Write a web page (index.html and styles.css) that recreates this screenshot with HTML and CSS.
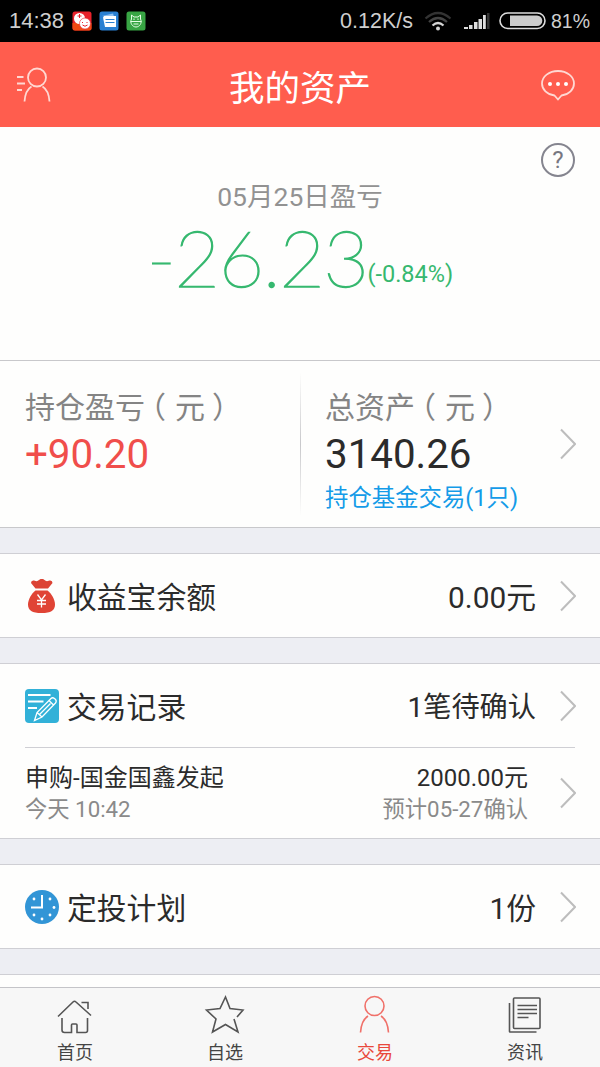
FILE: index.html
```html
<!DOCTYPE html>
<html lang="zh-CN">

<head>
  <meta charset="UTF-8">
  <meta name="viewport" content="width=device-width, initial-scale=1.0">
  <title>我的资产</title>
  <link rel="stylesheet" href="styles.css">
</head>

<body>
  <div class="status">
    <span class="time">14:38</span>
    <svg class="app" viewBox="0 0 20 20">
      <rect width="19" height="19" x=".5" y=".5" rx="2.5" fill="#e8222b"/>
      <path d="M.5 12h19v5a2.500 2.500 0 0 1-2.500 2.500h-14A2.500 2.500 0 0 1 .5 17z" fill="#f04a13"/>
      <circle cx="7.500" cy="7.500" r="5.500" fill="#fff"/>
      <circle cx="13" cy="12.500" r="5.500" fill="#fff" stroke="#e8222b" stroke-width=".6"/>
      <path d="M5.500 5h4M7.500 3v4M10.500 11v1M15 11v1M10.500 14q2.500 2.500 5 0" fill="none" stroke="#e8222b"/>
    </svg>
    <svg class="app" viewBox="0 0 20 20">
      <rect width="19" height="19" x=".5" y=".5" rx="2.500" fill="#2a80d2"/>
      <path d="M3 5l11-2.500 1 3z" fill="#8fc0f0"/>
      <path d="M4 6.500l1-1.500h12v11H6z" fill="#fff"/>
      <path d="M6.500 8.500h9M6.500 11.500h9" stroke="#2a80d2"/>
    </svg>
    <svg class="app" viewBox="0 0 20 20">
      <rect width="19" height="19" x=".5" y=".5" rx="2.500" fill="#38a544"/>
      <path d="M5.500 8V4l2.500 2h4l2.500-2v4c2 4-1 8-4.500 8s-6.500-4-4.500-8zM4.500 10.500h11M7.500 13h5" fill="none" stroke="#e6ffe6"/>
      <path d="M8 7.500V9M12 7.500V9" stroke="#e6ffe6"/>
    </svg>
    <span class="speed">0.12K/s</span>
    <svg class="wifi" width="28" height="20" viewBox="0 0 28 20">
      <g fill="none" stroke-width="2.200">
        <path d="M1.500 7.500q12.500-11 25 0" stroke="#333"/>
        <path d="M5 11q9-8 18 0" stroke="#444"/>
        <path d="M8.500 14.500q5.500-5 11 0" stroke="#d5d5d5"/>
      </g>
      <circle cx="14" cy="17.500" r="2" fill="#d5d5d5"/>
    </svg>
    <svg class="signal" width="27" height="18" viewBox="0 0 27 18">
      <path d="M1 15h4v2H1zM6 13h3.500v4H6zM11 10h3.500v7H11zM15.500 7H19v10h-3.500zM20 3h2.800v14H20z" fill="#ddd"/>
      <path d="M24 1h2.500v16H24z" fill="#333"/>
    </svg>
    <svg class="battery" width="48" height="18" viewBox="0 0 48 18">
      <rect x="1" y="1" width="45" height="15.500" rx="7.700" fill="none" stroke="#ddd" stroke-width="1.600"/>
      <path d="M11 3.500h27a5.300 5.300 0 0 1 0 10.600H11z" fill="#ccc"/>
    </svg>
    <span class="percent">81%</span>
  </div>

  <header class="header">
    <svg width="36" height="36" viewBox="0 0 36 36" class="line-icon">
      <circle cx="21" cy="10.500" r="9"/>
      <path d="M8.500 34.500c.5-7 2-12 7-15M33.500 34.500c-.5-7-2-12-7-15M1 10h6.500M1 16.500h8M1 23h5"/>
    </svg>
    <h1>我的资产</h1>
    <svg width="36" height="32" viewBox="0 0 36 32" class="line-icon">
      <path d="M18 30.500l-3.500-4C7 25.500 2 20.500 2 14.500 2 7.500 9 2 18 2s16 5.500 16 12.500c0 6-5 11-12.500 12z"/>
      <g fill="#fff" stroke="none">
        <circle cx="10" cy="15" r="2"/>
        <circle cx="18" cy="15" r="2"/>
        <circle cx="26" cy="15" r="2"/>
      </g>
    </svg>
  </header>

  <main class="content">
    <section class="hero">
      <span class="help">?</span>
      <div class="date">05月25日盈亏</div>
      <div class="profit"><span class="amount">-26.23</span><span class="rate">(-0.84%)</span></div>
    </section>

    <section class="summary">
      <div class="cell">
        <div class="label">持仓盈亏<span class="paren">（</span>元<span class="paren-end">）</span></div>
        <div class="num up">+90.20</div>
      </div>
      <div class="cell total">
        <div class="label">总资产<span class="paren">（</span>元<span class="paren-end">）</span></div>
        <div class="num">3140.26</div>
        <div class="link">持仓基金交易(1只)</div>
      </div>
      <svg class="arrow" viewBox="0 0 16 32"><path d="M1 1.500L15 16 1 30.500"/></svg>
    </section>

    <section class="card">
      <div class="row">
        <svg class="icon" viewBox="0 0 34 34">
          <path d="M10.500 9.500L6 4q0-3 3-2.500l2.500.8Q13 2 14 1q3-2.500 5.500 0 1 1 2.500 1.300l2.500-.8q3-.5 3 2.500l-4.500 5.500z" fill="#dc4334"/>
          <path d="M10.500 11.500h12c4 3 7.500 9 7.500 14 0 6-4 8.500-13.500 8.500S3 31.500 3 25.500c0-5 3.500-11 7.500-14z" fill="#e04435"/>
          <path d="M12.500 15.500l4 5.500 4-5.500M16.500 21v7.500M12 21.500h9M12 25h9" fill="none" stroke="#fff" stroke-width="1.300"/>
        </svg>
        <span class="name">收益宝余额</span>
        <span class="value">0.00元</span>
        <svg class="arrow" viewBox="0 0 16 32"><path d="M1 1.500L15 16 1 30.500"/></svg>
      </div>
    </section>

    <section class="card">
      <div class="row">
        <svg class="icon" viewBox="0 0 34 34">
          <rect width="34" height="34" rx="4" fill="#32b1d8"/>
          <g fill="none" stroke="#fff" stroke-width="1.800">
            <path d="M3 6h22.500M3 12.500h15.500M3 19h9"/>
            <path d="M9.500 31.500l2.500-8L26 9.500q1.500-1.500 3.500 0l1 1q1.500 1.500 0 3.500L17 28zM12 23.500l5 4.500M24 11.500l4.500 4.500M14.500 25.500l11-11" stroke-width="1.300"/>
          </g>
        </svg>
        <span class="name">交易记录</span>
        <span class="value pending">1笔待确认</span>
        <svg class="arrow" viewBox="0 0 16 32"><path d="M1 1.500L15 16 1 30.500"/></svg>
      </div>
      <div class="record">
        <div>
          <div class="fund">申购-国金国鑫发起</div>
          <div class="note">今天 10:42</div>
        </div>
        <div class="right">
          <div class="fund">2000.00元</div>
          <div class="note">预计05-27确认</div>
        </div>
        <svg class="arrow" viewBox="0 0 16 32"><path d="M1 1.500L15 16 1 30.500"/></svg>
      </div>
    </section>

    <section class="card">
      <div class="row">
        <svg class="icon" viewBox="0 0 34 34">
          <circle cx="17" cy="17" r="17" fill="#3295d6"/>
          <path d="M17 5v12.500H6" fill="none" stroke="#fff" stroke-width="2"/>
          <g fill="#fff">
            <circle cx="25" cy="9" r="1.400"/>
            <circle cx="29" cy="17.500" r="1.400"/>
            <circle cx="25" cy="25" r="1.400"/>
            <circle cx="17" cy="29" r="1.400"/>
            <circle cx="9" cy="25" r="1.400"/>
            <circle cx="9" cy="9" r="1.400"/>
          </g>
        </svg>
        <span class="name">定投计划</span>
        <span class="value">1份</span>
        <svg class="arrow" viewBox="0 0 16 32"><path d="M1 1.500L15 16 1 30.500"/></svg>
      </div>
    </section>

    <section class="card">
      <div class="row"></div>
    </section>
  </main>

  <nav class="tabs">
    <a class="tab">
      <svg viewBox="0 0 40 40">
        <path d="M3 18.500L18 4q1.500-1.500 3 0l15 13.500M7 20v12q0 2.500 2.500 2.500h7V27q0-1 1-1H21q1 0 1 1v7.500h8.500q2 0 2-2V20M26.500 4.500h6.500v6.500"/>
      </svg>
      <span>首页</span>
    </a>
    <a class="tab">
      <svg viewBox="0 0 40 40">
        <path d="M32 19l6-7-13-1.500L20.500-1 15 10.500 1.500 12 11 21 7.500 34l13-7.500L33 34l-4-13"/>
      </svg>
      <span>自选</span>
    </a>
    <a class="tab active">
      <svg viewBox="0 0 40 40">
        <circle cx="19.500" cy="8" r="9.500"/>
        <path d="M5.500 34.500c.5-8 2-13 7.500-16.500M33.500 34.500c-.5-8-2-13-7.500-16.500"/>
      </svg>
      <span>交易</span>
    </a>
    <a class="tab">
      <svg viewBox="0 0 40 40">
        <rect x="8.500" y="0" width="26.500" height="30.500" rx="1"/>
        <path d="M4.500 5v28.500q0 .5.500.5h26.500M12.500 7.500h19.500M12.500 11.500h19.500M12.500 15.500h19.500M12.500 19.500h11"/>
      </svg>
      <span>资讯</span>
    </a>
  </nav>
</body>

</html>
```
FILE: styles.css
```css
* {
  box-sizing: border-box;
}

body {
  margin: 0;
  height: 1067px;
  display: flex;
  flex-direction: column;
  overflow: hidden;
  background-color: #edeef3;
  color: #2b2b2b;
  font-family: Roboto, "Noto Sans CJK SC", sans-serif;
}

svg {
  display: block;
  flex: none;
}

/* status bar */
.status {
  height: 42px;
  flex: none;
  display: flex;
  align-items: center;
  padding: 0 10px 0 9px;
  background-color: #000;
  color: #cfcfcf;
  font-family: "Liberation Sans", sans-serif;
  font-size: 22px;
}

.time {
  width: 56px;
}

.app {
  width: 20px;
  height: 20px;
  margin-left: 7px;
}

.speed {
  margin-left: auto;
  font-size: 21.5px;
}

.wifi {
  margin-left: 11px;
}

.signal {
  margin-left: 11px;
}

.battery {
  margin-left: 9px;
}

.percent {
  margin-left: 4px;
  font-size: 19.5px;
}

/* title bar */
.header {
  height: 85px;
  flex: none;
  display: flex;
  align-items: center;
  justify-content: space-between;
  padding: 0 24px 0 16px;
  background-color: #ff5d4e;
  color: #fff;
}

.header h1 {
  margin: 2px 0 0 8px;
  font-size: 35.5px;
  font-weight: 400;
}

.line-icon {
  fill: none;
  stroke: #ffd8d2;
  stroke-width: 1.8;
}

.content {
  flex: 1;
  min-height: 0;
  overflow: hidden;
}

/* today's profit */
.hero {
  position: relative;
  height: 233px;
  padding-top: 50px;
  background-color: #fefefd;
  text-align: center;
}

.help {
  position: absolute;
  top: 16px;
  right: 25px;
  width: 34px;
  height: 34px;
  border: 2px solid #85858f;
  border-radius: 50%;
  color: #777781;
  font-size: 24px;
  line-height: 31px;
}

.date {
  color: #929292;
  font-size: 26.5px;
  line-height: 40px;
}

.profit {
  display: flex;
  justify-content: center;
  align-items: flex-start;
  color: #36b86f;
}

.amount {
  font-family: Lato, sans-serif;
  font-size: 79px;
  font-weight: 100;
  line-height: 80px;
  letter-spacing: -1.7px;
  -webkit-text-stroke: 1.3px #36b86f;
}

.rate {
  margin-top: 43px;
  font-size: 23.5px;
  line-height: 28px;
}

/* holdings */
.summary {
  height: 168px;
  display: flex;
  align-items: center;
  padding-right: 24px;
  border-top: 1px solid #c8c8cb;
  border-bottom: 1px solid #c8c8cb;
  background-color: #fefefd;
}

.cell {
  width: 300px;
  height: 142px;
  padding: 11px 0 0 25px;
}

.total {
  flex: 1;
  padding-left: 24px;
  border-left: 1px solid;
  border-image: linear-gradient(#fefefd, #c8c8cb 50%, #fefefd) 1;
}

.label {
  color: #848484;
  font-size: 30px;
  line-height: 48px;
  white-space: nowrap;
}

/* half-width brackets */
.paren,
.paren-end {
  font-feature-settings: "halt";
}

.paren {
  margin: 0 9px 0 6px;
}

.paren-end {
  margin-left: 7px;
}

.num {
  font-size: 40.3px;
  line-height: 46px;
}

.up {
  color: #f04e4b;
}

.link {
  color: #149be8;
  font-size: 23.4px;
  line-height: 40px;
}

.arrow {
  width: 16px;
  height: 32px;
  fill: none;
  stroke: #bdbdbd;
  stroke-width: 2;
}

/* list cards */
.card {
  margin-top: 25px;
  border-top: 1px solid #cfcfd4;
  border-bottom: 1px solid #cfcfd4;
  background-color: #fefefd;
}

.row {
  height: 83px;
  display: flex;
  align-items: center;
  padding: 0 24px 0 25px;
  font-size: 29.8px;
}

.icon {
  width: 34px;
  height: 34px;
}

.name {
  margin-left: 8px;
  padding-bottom: 1px;
}

.value {
  margin-left: auto;
  margin-right: 24px;
  padding-bottom: 2px;
}

.pending {
  font-size: 28.2px;
}

.record {
  height: 91px;
  display: flex;
  align-items: center;
  margin-left: 25px;
  margin-right: 25px;
  border-top: 1px solid #cfcfd4;
}

.record .right {
  margin-left: auto;
  margin-right: 32px;
  text-align: right;
}

.record .arrow {
  margin-right: -1px;
}

.fund {
  font-size: 24px;
  line-height: 32px;
}

.note {
  color: #8a8a8a;
  font-size: 22.3px;
  line-height: 31px;
}

/* bottom tabs */
.tabs {
  height: 80px;
  flex: none;
  display: flex;
  border-top: 1px solid #c4c4c8;
  background-color: #f7f7f7;
}

.tab {
  flex: 1;
  display: flex;
  flex-direction: column;
  align-items: center;
  padding-top: 10px;
  color: #444;
  font-size: 18px;
  line-height: 29px;
}

.tab svg {
  width: 40px;
  height: 40px;
  overflow: visible;
  fill: none;
  stroke: #555;
  stroke-width: 1.6;
}

.tab.active {
  color: #e9483c;
}

.tab.active svg {
  stroke: #f0716a;
}
```
